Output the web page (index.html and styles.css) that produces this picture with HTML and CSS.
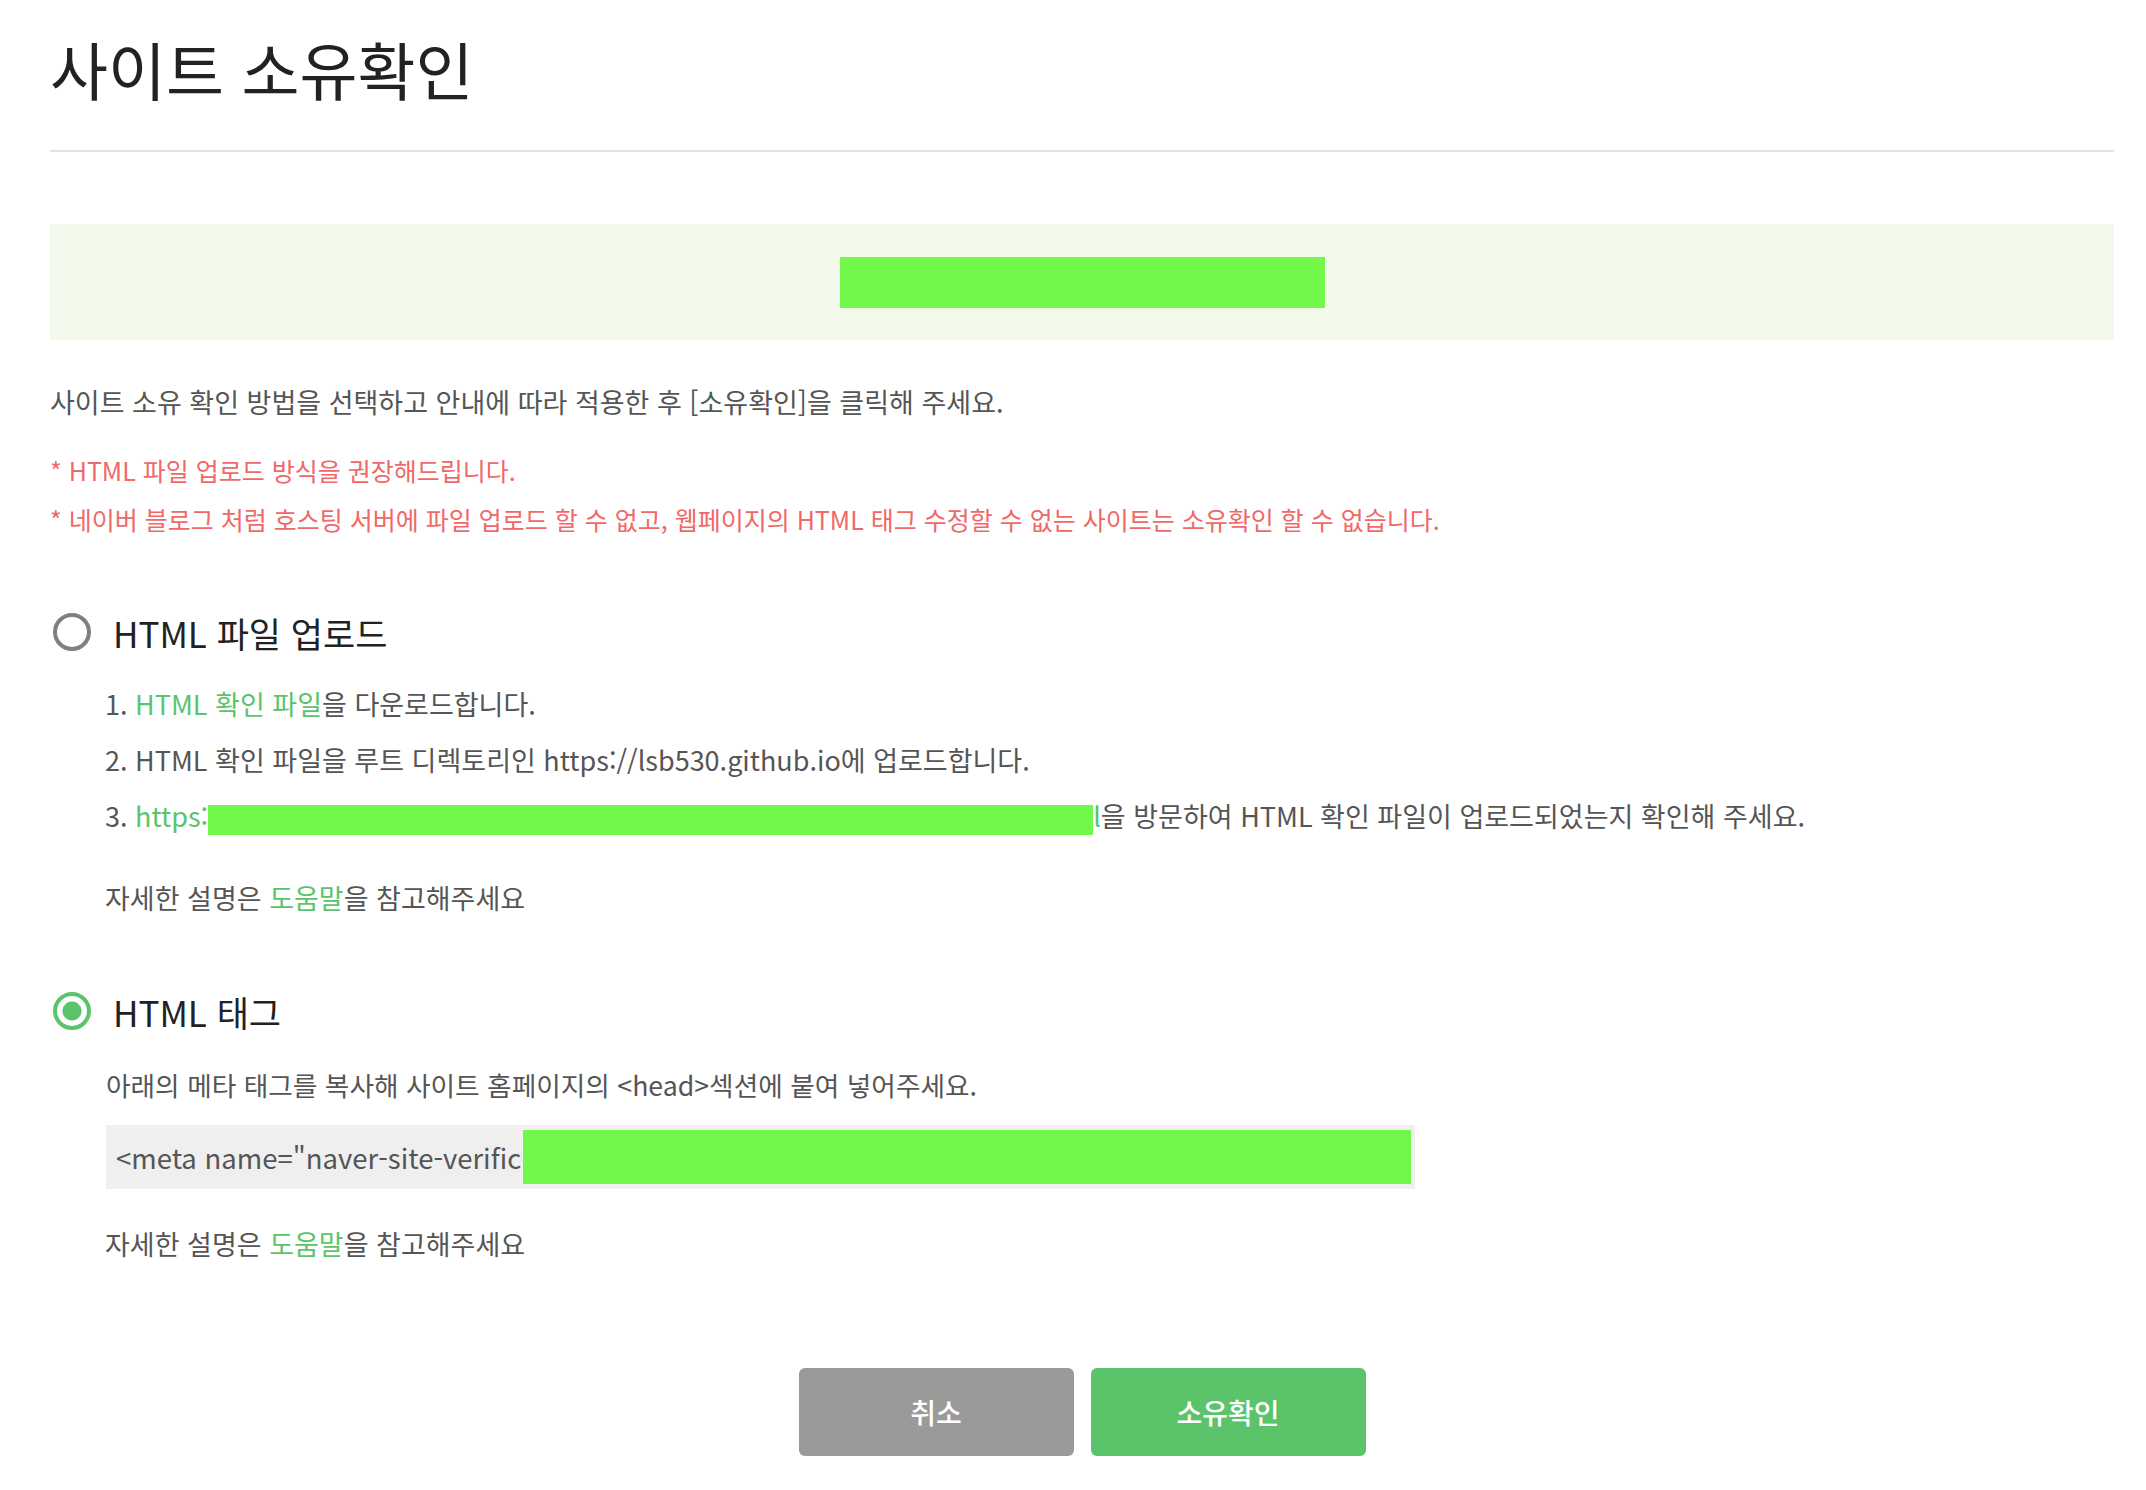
FILE: index.html
```html
<!DOCTYPE html>
<html lang="ko">
<head>
  <meta charset="utf-8">
  <title>사이트 소유확인</title>
  <link rel="stylesheet" href="styles.css">
</head>
<body>
  <div class="page">
    <div class="page-head">
      <h1 class="title">사이트 소유확인</h1>
    </div>

    <div class="site-box">
      <span class="mask mask-site"></span>
    </div>

    <p class="notice">사이트 소유 확인 방법을 선택하고 안내에 따라 적용한 후 [소유확인]을 클릭해 주세요.</p>
    <ul class="warnings">
      <li>* HTML 파일 업로드 방식을 권장해드립니다.</li>
      <li>* 네이버 블로그 처럼 호스팅 서버에 파일 업로드 할 수 없고, 웹페이지의 HTML 태그 수정할 수 없는 사이트는 소유확인 할 수 없습니다.</li>
    </ul>

    <div class="method">
      <label class="method-head">
        <input type="radio" name="method" class="radio">
        <span>HTML 파일 업로드</span>
      </label>
      <ol class="steps">
        <li>1. <a class="link" href="#">HTML 확인 파일</a>을 다운로드합니다.</li>
        <li>2. HTML 확인 파일을 루트 디렉토리인 https://lsb530.github.io에 업로드합니다.</li>
        <li>3. <a class="link" href="#">https:<span class="mask mask-url"></span>l</a>을 방문하여 HTML 확인 파일이 업로드되었는지 확인해 주세요.</li>
      </ol>
      <p class="help">자세한 설명은 <a class="link" href="#">도움말</a>을 참고해주세요</p>
    </div>

    <div class="method method-tag">
      <label class="method-head">
        <input type="radio" name="method" class="radio" checked>
        <span>HTML 태그</span>
      </label>
      <p class="desc">아래의 메타 태그를 복사해 사이트 홈페이지의 &lt;head&gt;섹션에 붙여 넣어주세요.</p>
      <div class="meta-box">
        <span class="meta-text">&lt;meta name="naver-site-verific</span>
        <span class="mask mask-meta"></span>
      </div>
      <p class="help">자세한 설명은 <a class="link" href="#">도움말</a>을 참고해주세요</p>
    </div>

    <div class="actions">
      <button class="btn btn-cancel">취소</button>
      <button class="btn btn-ok">소유확인</button>
    </div>
  </div>
</body>
</html>
```

FILE: styles.css
```css
body {
  margin: 0;
  font-family: "Noto Sans CJK KR", "Noto Sans", sans-serif;
  color: #555;
  background: #fff;
}

.page {
  margin: 0 32px 0 50px;
}

.page-head {
  padding-top: 28px;
  padding-bottom: 42px;
  border-bottom: 2px solid #e2e2e2;
}

.title {
  margin: 0;
  font-size: 63px;
  font-weight: 400;
  line-height: 80px;
  color: #222;
}

.site-box {
  display: flex;
  align-items: center;
  justify-content: center;
  height: 116px;
  margin-top: 72px;
  background: #f2f8ea;
}

.mask {
  display: inline-block;
  background: #72f74b;
}

.mask-site {
  width: 485px;
  height: 51px;
}

.notice {
  margin: 44px 0 0;
  font-size: 27px;
  line-height: 36px;
}

.warnings {
  margin: 26px 0 0;
  padding: 0;
  list-style: none;
  font-size: 25px;
  line-height: 49px;
  color: #f06868;
}

.method {
  margin-top: 68px;
}

.method-tag {
  margin-top: 73px;
}

.method-head {
  display: flex;
  align-items: center;
  gap: 22px;
  height: 40px;
  margin-left: 3px;
  font-size: 35px;
  color: #222;
}

.radio {
  appearance: none;
  width: 38px;
  height: 38px;
  margin: 0;
  border: 4px solid #808080;
  border-radius: 50%;
  background: #fff;
}

.radio:checked {
  border-color: #5bc46a;
  background: radial-gradient(circle, #5bc46a 0 9px, #fff 10px);
}

.steps {
  margin: 24px 0 0 55px;
  padding: 0;
  list-style: none;
  font-size: 27px;
  line-height: 56px;
}

.link {
  color: #5bc46a;
  text-decoration: none;
}

.mask-url {
  width: 885px;
  height: 30px;
  vertical-align: middle;
}

.help {
  margin: 34px 0 0 55px;
  font-size: 27px;
  line-height: 40px;
}

.desc {
  margin: 34px 0 0 56px;
  font-size: 26.7px;
  line-height: 40px;
}

.meta-box {
  display: flex;
  align-items: center;
  width: 1309px;
  height: 64px;
  margin: 20px 0 0 56px;
  padding: 0 4px 0 10px;
  box-sizing: border-box;
  background: #efefef;
}

.meta-text {
  flex: 1;
  overflow: hidden;
  white-space: nowrap;
  font-size: 27.5px;
}

.mask-meta {
  width: 888px;
  height: 54px;
}

.method-tag .help {
  margin-top: 35px;
}

.actions {
  display: flex;
  justify-content: center;
  gap: 17px;
  margin-top: 104px;
}

.btn {
  width: 275px;
  height: 88px;
  border: 0;
  border-radius: 6px;
  font-family: inherit;
  font-size: 28px;
  font-weight: 500;
  color: #fff;
}

.btn-cancel {
  background: #9a9a9a;
}

.btn-ok {
  background: #5bc46a;
}
```
